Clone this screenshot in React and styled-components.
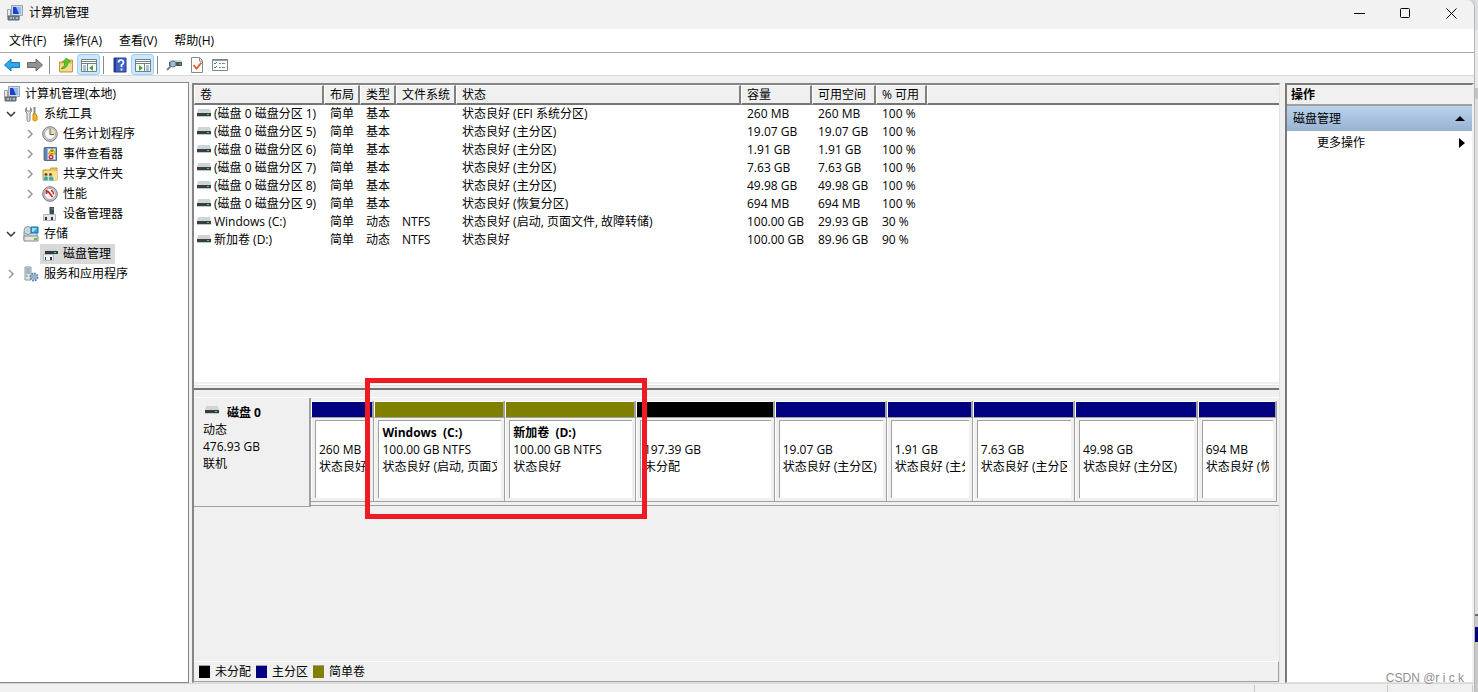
import React from "react";
import styled, { createGlobalStyle, css } from "styled-components";

const tree = [
  { label: "计算机管理(本地)", icon: "computer", depth: 0 },
  { label: "系统工具", icon: "tools", depth: 1, arrow: "open" },
  { label: "任务计划程序", icon: "clock", depth: 2, arrow: "closed" },
  { label: "事件查看器", icon: "events", depth: 2, arrow: "closed" },
  { label: "共享文件夹", icon: "shared", depth: 2, arrow: "closed" },
  { label: "性能", icon: "perf", depth: 2, arrow: "closed" },
  { label: "设备管理器", icon: "device", depth: 2 },
  { label: "存储", icon: "storage", depth: 1, arrow: "open" },
  { label: "磁盘管理", icon: "diskmgmt", depth: 2, selected: true },
  { label: "服务和应用程序", icon: "services", depth: 1, arrow: "closed" },
];

const columns = [
  ["卷", 130],
  ["布局", 36],
  ["类型", 36],
  ["文件系统", 60],
  ["状态", 285],
  ["容量", 71],
  ["可用空间", 64],
  ["% 可用", 51],
];

const volumes = [
  ["(磁盘 0 磁盘分区 1)", "简单", "基本", "", "状态良好 (EFI 系统分区)", "260 MB", "260 MB", "100 %"],
  ["(磁盘 0 磁盘分区 5)", "简单", "基本", "", "状态良好 (主分区)", "19.07 GB", "19.07 GB", "100 %"],
  ["(磁盘 0 磁盘分区 6)", "简单", "基本", "", "状态良好 (主分区)", "1.91 GB", "1.91 GB", "100 %"],
  ["(磁盘 0 磁盘分区 7)", "简单", "基本", "", "状态良好 (主分区)", "7.63 GB", "7.63 GB", "100 %"],
  ["(磁盘 0 磁盘分区 8)", "简单", "基本", "", "状态良好 (主分区)", "49.98 GB", "49.98 GB", "100 %"],
  ["(磁盘 0 磁盘分区 9)", "简单", "基本", "", "状态良好 (恢复分区)", "694 MB", "694 MB", "100 %"],
  ["Windows (C:)", "简单", "动态", "NTFS", "状态良好 (启动, 页面文件, 故障转储)", "100.00 GB", "29.93 GB", "30 %"],
  ["新加卷 (D:)", "简单", "动态", "NTFS", "状态良好", "100.00 GB", "89.96 GB", "90 %"],
];

const NAVY = "#000080";
const OLIVE = "#808000";
const BLACK = "#000";

const partitions = [
  { weight: 63, color: NAVY, size: "260 MB", status: "状态良好" },
  { weight: 131, color: OLIVE, name: "Windows  (C:)", size: "100.00 GB NTFS", status: "状态良好 (启动, 页面文件, 故障转储)" },
  { weight: 131, color: OLIVE, name: "新加卷  (D:)", size: "100.00 GB NTFS", status: "状态良好" },
  { weight: 139, color: BLACK, size: "197.39 GB", status: "未分配" },
  { weight: 112, color: NAVY, size: "19.07 GB", status: "状态良好 (主分区)" },
  { weight: 86, color: NAVY, size: "1.91 GB", status: "状态良好 (主分区)" },
  { weight: 102, color: NAVY, size: "7.63 GB", status: "状态良好 (主分区)" },
  { weight: 123, color: NAVY, size: "49.98 GB", status: "状态良好 (主分区)" },
  { weight: 79, color: NAVY, size: "694 MB", status: "状态良好 (恢复分区)" },
];

const legend = [
  ["未分配", BLACK],
  ["主分区", NAVY],
  ["简单卷", OLIVE],
];

const icons = {
  computer: (
    <>
      <path d="M4.500.5h11v10h-11z" fill="#d5dae0" stroke="#9aa3ae" />
      <path d="M6 2h8v7H6z" fill="#1c3fd0" />
      <path d="M9 2h5v7h-2z" fill="#8dbdf5" />
      <path d="M9 10h4v2H9z" fill="#a3a9b1" />
      <path d="M.5 4.500h3v7h-3z" fill="#e6eaee" stroke="#9aa1ab" />
      <path d="M1 11h11v4H1z" fill="#75838d" stroke="#58656e" />
      <path d="M3 13h2M6 13h1M9 13h2" stroke="#dce8ee" />
    </>
  ),
  tools: (
    <>
      <path d="M4 7v7a1.500 1.500 0 0 0 3 0V7c2-1 2-4 .5-5.500V5h-4V1.500C2 3 2 6 4 7z" fill="#e4e4e4" stroke="#858585" />
      <path d="M11.500 1v8" stroke="#8a8a8a" strokeWidth="2" />
      <path d="M10 8h3v1l1 1v4q-2.500 2-4 0v-4z" fill="#f4b622" stroke="#c98a08" />
    </>
  ),
  clock: (
    <>
      <circle cx="8" cy="8" r="7.300" fill="#d0d3d7" stroke="#777b80" />
      <circle cx="8" cy="8" r="5.500" fill="#fbf8ee" stroke="#a4a8ad" />
      <path d="M8 8V2.500A5.500 5.500 0 0 1 13.500 8z" fill="#f0d9a4" />
      <path d="M8 3v5.500h4" fill="none" stroke="#525b68" />
    </>
  ),
  events: (
    <>
      <path d="M2.500 1.500h12v13h-12z" fill="#8eb4dc" stroke="#486a94" />
      <path d="M4 2v12" stroke="#34568c" />
      <path d="M1 3h3M1 5h3M1 7h3M1 9h3M1 11h3M1 13h3" stroke="#6d7f96" />
      <path d="M6 3h7v10H6z" fill="#e6eff8" />
      <path d="M10 2l4 6H6.500z" fill="#ffdc38" stroke="#bd9714" />
      <path d="M10 4v2M10 7v.7" stroke="#332b00" />
      <circle cx="9" cy="11" r="2.500" fill="#d52d2d" />
      <path d="M8 10l2 2M10 10l-2 2" stroke="#fff" strokeWidth=".7" />
    </>
  ),
  shared: (
    <>
      <path d="M1 4h7l1-2h6v12H1z" fill="#edc45f" stroke="#c49a35" />
      <path d="M2 5h13v9H2z" fill="#f9df8c" />
      <circle cx="4" cy="8.500" r="1.500" fill="#594836" />
      <circle cx="8.500" cy="8.500" r="1.500" fill="#594836" />
      <path d="M1 15q0-5 3-5t3 5zM6 15q0-5 3-5t3 5z" fill="#49a89e" stroke="#ecf5ed" strokeWidth=".6" />
    </>
  ),
  perf: (
    <>
      <circle cx="8" cy="8" r="7.300" fill="#c9cccf" stroke="#757575" />
      <circle cx="8" cy="8" r="5.500" fill="#fff" stroke="#a9a9a9" />
      <path d="M4.500 8V5l2 1 4 5" fill="none" stroke="#cf2020" strokeWidth="1.700" />
      <path d="M9 4.500q2.500.5 2.500 4" fill="none" stroke="#cf2020" strokeWidth="1.300" />
    </>
  ),
  device: (
    <>
      <path d="M7 1h5v8H7z" fill="#414950" />
      <path d="M7 1h1v8H7z" fill="#9ea6ad" />
      <circle cx="10.500" cy="3" r=".8" fill="#46e06c" />
      <path d="M1.500 8.500h12v6h-12z" fill="#e4e6e9" stroke="#b0b5ba" />
      <path d="M3 11h2v3H3zM9 11h2v3H9z" fill="#30363c" />
    </>
  ),
  storage: (
    <>
      <path d="M1 6l2-3h11v11H1z" fill="#d8dcdf" stroke="#92989e" />
      <circle cx="5" cy="4.500" r="4" fill="#ccdedf" stroke="#82979c" />
      <circle cx="5" cy="4.500" r="1" fill="#fff" stroke="#829090" strokeWidth=".5" />
      <path d="M8 1h7v6H8z" fill="#2ba8e4" stroke="#196fa0" />
      <path d="M9 2h5l-4 4H9z" fill="#9bdefa" />
      <path d="M1 10h14v5H1z" fill="#e2e4e6" stroke="#868b90" />
      <path d="M11 12h3v2h-3z" fill="#55cc31" />
    </>
  ),
  diskmgmt: (
    <>
      <path d="M4 3h10l1 2H3z" fill="#cdd3d9" />
      <path d="M3 5h13v3H3z" fill="#343a3f" />
      <path d="M12 6.500h2" stroke="#2fe267" />
      <path d="M1.500 8.500h10v6h-10z" fill="#f0f1f2" stroke="#b5babf" />
      <path d="M3 11h1v3H3zM8 11h2v3H8z" fill="#33383c" />
    </>
  ),
  services: (
    <>
      <path d="M2 1h6v13H2z" fill="#dfe5eb" stroke="#8b98a5" />
      <path d="M3 3h4M3 5h4M3 7h4" stroke="#6f8295" />
      <path d="M3 10h2" stroke="#39a639" />
      <circle cx="11" cy="11" r="3.500" fill="#b6d1e7" stroke="#6389aa" strokeWidth="2" strokeDasharray="1.800 .9" />
      <circle cx="11" cy="11" r="1.300" fill="#fff" stroke="#6389aa" />
    </>
  ),
  back: <path d="M.5 8L7 2v3.500h8.500v5H7V14z" fill="#31a8ea" stroke="#1679b8" strokeLinejoin="round" />,
  forward: <path d="M15.500 8L9 2v3.500H.5v5H9V14z" fill="#929292" stroke="#666" strokeLinejoin="round" />,
  up: (
    <>
      <path d="M1.500 5h5l1-2h7v12h-13z" fill="#edc963" stroke="#be9a43" />
      <path d="M2 7h12v7H2z" fill="#f6dc8c" />
      <path d="M3.500 11Q7 10 7 5H4.500L8.500 1l4 4H10q0 6-6.500 7z" fill="#58c832" stroke="#329418" strokeWidth=".7" />
    </>
  ),
  paneLeft: (
    <>
      <path d="M.5 2.500h15v12H.5z" fill="#fff" stroke="#777e85" />
      <path d="M1 4.500h14M1 6.500h14M6.500 7v8" stroke="#777e85" />
      <path d="M2 9h3M2 11h3M2 13h3" stroke="#4d82b4" />
      <path d="M12 8v6l-4-3z" fill="#37ad30" />
    </>
  ),
  paneRight: (
    <>
      <path d="M.5 2.500h15v12H.5z" fill="#fff" stroke="#777e85" />
      <path d="M1 4.500h14M1 6.500h14M9.500 7v8" stroke="#777e85" />
      <path d="M11 9h3M11 11h3M11 13h3" stroke="#4d82b4" />
      <path d="M4 8v6l4-3z" fill="#37ad30" />
    </>
  ),
  help: (
    <>
      <path d="M2 1h12v14H2z" fill="#3f63ca" stroke="#263f8f" />
      <path d="M2 1h2v14H2z" fill="#243b87" />
      <path d="M6.500 5.500Q6.500 3 9 3t2.500 2.500q0 1.500-2 2.500V10M9.500 11.500v2" fill="none" stroke="#fff" strokeWidth="1.700" />
    </>
  ),
  scan: (
    <>
      <path d="M4 3h11l1 2H3z" fill="#ced5db" />
      <path d="M3 5h13v4H3z" fill="#4a555e" />
      <path d="M13 7h2" stroke="#3bdd4f" />
      <circle cx="7" cy="7" r="3" fill="#9dbed3" stroke="#65798a" />
      <path d="M5 9l-4 4" stroke="#78858e" strokeWidth="2" />
    </>
  ),
  check: (
    <>
      <path d="M2.500.5h8l3 3v12h-11z" fill="#fff" stroke="#83898d" />
      <path d="M10.500 1v3h3" fill="none" stroke="#83898d" />
      <path d="M4.500 8l3 3.500 5-6" fill="none" stroke="#e45c26" strokeWidth="1.800" />
    </>
  ),
  props: (
    <>
      <path d="M.5 2.500h15v11H.5z" fill="#fff" stroke="#7c858c" />
      <path d="M1 3.500h14" stroke="#969da2" />
      <path d="M2 6l1 1 2-2M2 10l1 1 2-2" fill="none" stroke="#277dc1" />
      <path d="M7 6.500h2M10 6.500h3M7 10.500h2M10 10.500h3" stroke="#7e8890" />
    </>
  ),
};

const Icon = ({ name }) => (
  <IconSvg viewBox="0 0 16 16" aria-hidden="true">
    {icons[name]}
  </IconSvg>
);

const DriveIcon = () => (
  <DriveSvg viewBox="0 0 14 8" aria-hidden="true">
    <path d="M1 0h12l1 4H0z" fill="#d0d4d8" />
    <path d="M0 4h14v3H0z" fill="#3b3e40" />
    <path d="M0 7.500h14" stroke="#c4c7ca" />
    <path d="M10 5.500h2" stroke="#25eb4c" />
  </DriveSvg>
);

const App = () => {
  return (
    <Desktop>
      <GlobalStyle />
      <Window>
        <TitleBar>
          <Icon name="computer" />
          <Caption>计算机管理</Caption>
          <CaptionButton aria-label="最小化">
            <svg width="11" height="11" viewBox="0 0 11 11">
              <path d="M0 5.500h11" stroke="#000" />
            </svg>
          </CaptionButton>
          <CaptionButton aria-label="最大化">
            <svg width="11" height="11" viewBox="0 0 11 11">
              <rect x=".5" y=".5" width="9" height="9" rx="1" fill="none" stroke="#000" />
            </svg>
          </CaptionButton>
          <CaptionButton aria-label="关闭">
            <svg width="11" height="11" viewBox="0 0 11 11">
              <path d="M.5.5l10 10M10.500.5l-10 10" stroke="#000" />
            </svg>
          </CaptionButton>
        </TitleBar>
        <MenuBar>
          <MenuButton>文件(F)</MenuButton>
          <MenuButton>操作(A)</MenuButton>
          <MenuButton>查看(V)</MenuButton>
          <MenuButton>帮助(H)</MenuButton>
        </MenuBar>
        <Toolbar>
          <ToolButton aria-label="后退"><Icon name="back" /></ToolButton>
          <ToolButton aria-label="前进"><Icon name="forward" /></ToolButton>
          <ToolDivider />
          <ToolButton aria-label="上一级"><Icon name="up" /></ToolButton>
          <ToolButton aria-label="控制台树" $active><Icon name="paneLeft" /></ToolButton>
          <ToolDivider />
          <ToolButton aria-label="帮助"><Icon name="help" /></ToolButton>
          <ToolButton aria-label="操作窗格" $active><Icon name="paneRight" /></ToolButton>
          <ToolDivider />
          <ToolButton aria-label="重新扫描"><Icon name="scan" /></ToolButton>
          <ToolButton aria-label="应用"><Icon name="check" /></ToolButton>
          <ToolButton aria-label="设置"><Icon name="props" /></ToolButton>
        </Toolbar>
        <Body>
          <Sidebar>
            {tree.map((node) => (
              <TreeRow key={node.label} $depth={node.depth}>
                {node.depth > 0 && (
                  <Expander disabled={!node.arrow} aria-label={node.label}>
                    {node.arrow === "open" && (
                      <svg width="10" height="10" viewBox="0 0 10 10">
                        <path d="M1 3l4 4 4-4" fill="none" stroke="#333" strokeWidth="1.500" />
                      </svg>
                    )}
                    {node.arrow === "closed" && (
                      <svg width="10" height="10" viewBox="0 0 10 10">
                        <path d="M3 1l4 4-4 4" fill="none" stroke="#999" strokeWidth="1.500" />
                      </svg>
                    )}
                  </Expander>
                )}
                <TreeItem $selected={node.selected}>
                  <Icon name={node.icon} />
                  {node.label}
                </TreeItem>
              </TreeRow>
            ))}
          </Sidebar>
          <Main>
            <VolumeList>
              <Table>
                <colgroup>
                  {columns.map(([label, width]) => (
                    <Col key={label} $width={width} />
                  ))}
                  <col />
                </colgroup>
                <thead>
                  <tr>
                    {columns.map(([label]) => (
                      <HeadCell key={label}>{label}</HeadCell>
                    ))}
                    <HeadCell as="td" $last />
                  </tr>
                </thead>
                <tbody>
                  {volumes.map((row) => (
                    <tr key={row[0]}>
                      {row.map((value, i) => (
                        <Cell key={i} $first={i === 0}>
                          {i === 0 && <DriveIcon />}
                          {value}
                        </Cell>
                      ))}
                      <Cell />
                    </tr>
                  ))}
                </tbody>
              </Table>
            </VolumeList>
            <Splitter />
            <DiskView>
              <DiskRow>
                <DiskLabel>
                  <DiskName>
                    <DriveIcon />
                    磁盘 0
                  </DiskName>
                  <Line>动态</Line>
                  <Line>476.93 GB</Line>
                  <Line>联机</Line>
                </DiskLabel>
                <Partitions>
                  {partitions.map((part, i) => (
                    <Partition key={i} $weight={part.weight}>
                      <PartitionBar $color={part.color} />
                      <PartitionBody>
                        <PartitionInfo>
                          <Line $bold>{part.name}</Line>
                          <Line>{part.size}</Line>
                          <Line>{part.status}</Line>
                        </PartitionInfo>
                      </PartitionBody>
                    </Partition>
                  ))}
                </Partitions>
                <Highlight />
              </DiskRow>
              <Legend>
                {legend.map(([label, color]) => (
                  <LegendItem key={label}>
                    <Swatch $color={color} />
                    {label}
                  </LegendItem>
                ))}
              </Legend>
            </DiskView>
          </Main>
          <Actions>
            <ActionsTitle>操作</ActionsTitle>
            <ActionsGroup>
              磁盘管理
              <svg width="10" height="5" viewBox="0 0 10 5">
                <path d="M5 0l5 5H0z" />
              </svg>
            </ActionsGroup>
            <ActionsItem>
              更多操作
              <svg width="6" height="10" viewBox="0 0 6 10">
                <path d="M0 0l6 5-6 5z" />
              </svg>
            </ActionsItem>
          </Actions>
        </Body>
        <StatusBar>
          <StatusPart $width={133} />
          <StatusPart $width={85} />
          <StatusPart $width={2} />
        </StatusBar>
      </Window>
      <Backdrop />
      <Watermark>CSDN @r i c k</Watermark>
    </Desktop>
  );
};

const GlobalStyle = createGlobalStyle`
  * {
    box-sizing: border-box;
  }
  body {
    margin: 0;
    color: #000;
    font: 12px/16px "Open Sans", "Noto Sans CJK SC", sans-serif;
  }
  button {
    margin: 0;
    padding: 0;
    border: none;
    background: none;
    color: inherit;
    font: inherit;
  }
`;

const Desktop = styled.div`
  position: relative;
  display: flex;
  min-height: 100vh;
  background: #d4d7d9;
`;

const Window = styled.div`
  flex: 1;
  min-width: 0;
  display: flex;
  flex-direction: column;
  overflow: hidden;
  background: #f0f0f0;
  border-right: 1px solid #b4b6b8;
  border-top-right-radius: 8px;
`;

const Backdrop = styled.div`
  width: 3px;
  background: linear-gradient(
    #dcdfe2 0 30px,
    #e9e9e9 30px 88px,
    #c4c4c4 88px 99px,
    #dedede 99px 614px,
    #6d6d6d 614px 616px,
    #c8c8c8 616px 627px,
    #000080 627px 642px,
    #c8c8c8 642px
  );
`;

const IconSvg = styled.svg`
  flex: none;
  width: 16px;
  height: 16px;
`;

const DriveSvg = styled.svg`
  flex: none;
  width: 14px;
  height: 8px;
`;

const TitleBar = styled.header`
  display: flex;
  align-items: center;
  height: 29px;
  padding: 0 0 3px 7px;
  background: #f2f2f2;
`;

const Caption = styled.div`
  flex: 1;
  padding-left: 6px;
`;

const CaptionButton = styled.button`
  display: flex;
  align-items: center;
  justify-content: center;
  width: 46px;
  height: 26px;
`;

const MenuBar = styled.nav`
  display: flex;
  height: 24px;
  padding-left: 1px;
  background: #fff;
  border-bottom: 1px solid #a8a8a8;
`;

const MenuButton = styled.button`
  padding: 1px 9px 0 8px;
`;

const Toolbar = styled.div`
  display: flex;
  align-items: center;
  height: 23px;
  padding-top: 1px;
  background: #fff;
  border-bottom: 1px solid #d9d9d9;
`;

const ToolButton = styled.button`
  display: flex;
  align-items: center;
  justify-content: center;
  width: 23px;
  height: 21px;
  border-radius: 3px;
  ${({ $active }) =>
    $active &&
    css`
      background: #cce8ff;
      border: 1px solid #99d1ff;
    `}
`;

const ToolDivider = styled.span`
  width: 1px;
  height: 18px;
  margin: 0 4px 0 3px;
  background: #8b8b8b;
`;

const Body = styled.div`
  flex: 1;
  display: flex;
  padding-top: 6px;
`;

const Sidebar = styled.aside`
  flex: 0 0 189px;
  padding-top: 1px;
  background: #fff;
  border: solid #828790;
  border-width: 1px 1px 1px 0;
`;

const TreeRow = styled.div`
  display: flex;
  height: 20px;
  padding-left: ${({ $depth }) => ($depth ? $depth * 19 - 16 : 2)}px;
`;

const Expander = styled.button`
  display: flex;
  align-items: center;
  justify-content: center;
  width: 16px;
  margin-right: 2px;
`;

const TreeItem = styled.button`
  display: flex;
  align-items: center;
  gap: 5px;
  padding: 0 4px 0 2px;
  white-space: nowrap;
  background: ${({ $selected }) => ($selected ? "#d9d9d9" : "none")};
`;

const Main = styled.main`
  flex: 1;
  min-width: 0;
  display: flex;
  flex-direction: column;
  margin: 1px 5px 0 3px;
  border: solid #696969;
  border-width: 2px 1px 1px 2px;
  border-color: #868686 #e3e3e3 #e3e3e3 #868686;
`;

const VolumeList = styled.section`
  flex: 297 1 0;
  background: #fff;
  overflow: hidden;
`;

const Table = styled.table`
  width: 100%;
  table-layout: fixed;
  border-collapse: separate;
  border-spacing: 0;
`;

const Col = styled.col`
  width: ${({ $width }) => $width}px;
`;

const HeadCell = styled.th`
  height: 20px;
  padding: 0 0 0 5px;
  text-align: left;
  font-weight: normal;
  line-height: 16px;
  white-space: nowrap;
  background: #f0f0f0;
  border: solid;
  border-width: 1px 2px 2px 1px;
  border-color: #fff #808080 #757575 #fff;
  ${({ $last }) => $last && "border-right-width: 0;"}
`;

const Cell = styled.td`
  height: 18px;
  padding: 0 0 0 ${({ $first }) => ($first ? 3 : 6)}px;
  white-space: nowrap;
  line-height: 18px;
  svg {
    margin-right: 3px;
    vertical-align: 1px;
  }
`;

const Splitter = styled.div`
  height: 8px;
  background: #f0f0f0;
  border-top: 2px solid #f0f0f0;
  border-bottom: 2px solid #757575;
  box-shadow: inset 0 1px #fff, inset 0 2px #e3e3e3;
`;

const DiskView = styled.section`
  flex: 285 1 0;
  display: flex;
  flex-direction: column;
  justify-content: space-between;
  padding-top: 7px;
`;

const DiskRow = styled.div`
  position: relative;
  display: flex;
  align-items: flex-start;
  border-top: 1px solid #fff;
`;

const DiskLabel = styled.div`
  flex: 0 0 117px;
  height: 109px;
  padding: 6px 9px;
  border: solid #a0a0a0;
  border-width: 0 2px 1px 0;
`;

const DiskName = styled.div`
  display: flex;
  align-items: center;
  gap: 8px;
  height: 17px;
  padding-left: 2px;
  font-weight: bold;
  svg {
    margin-bottom: 5px;
  }
`;

const Line = styled.div`
  height: 17px;
  line-height: 17px;
  white-space: pre;
  font-weight: ${({ $bold }) => ($bold ? "bold" : "normal")};
`;

const Partitions = styled.div`
  flex: 1;
  min-width: 0;
  display: flex;
  height: 108px;
  padding: 3px 2px 3px 0;
  border-bottom: 1px solid #a0a0a0;
`;

const Partition = styled.div`
  flex: ${({ $weight }) => $weight} 1 0;
  min-width: 0;
  height: 101px;
  border: solid #a0a0a0;
  border-width: 0 1px 1px 0;
`;

const PartitionBar = styled.div`
  height: 17px;
  background: ${({ $color }) => $color};
  border: solid #fff;
  border-width: 1px 0 0 1px;
  border-right: 1px solid #a0a0a0;
  border-bottom: 1px solid #a0a0a0;
`;

const PartitionBody = styled.div`
  padding: 2px 3px 3px;
  border-left: 1px solid #fff;
`;

const PartitionInfo = styled.div`
  height: 78px;
  padding: 3px 0;
  background: #fff;
  border: solid #a0a0a0;
  border-width: 1px 0 0 1px;
  div {
    margin: 0 4px 0 3px;
    overflow: hidden;
  }
`;

/* red annotation around the two dynamic volumes */
const Highlight = styled.div`
  position: absolute;
  top: -20px;
  left: 171px;
  width: 282px;
  height: 141px;
  border: 5px solid #ed1c24;
`;

const Legend = styled.footer`
  display: flex;
  align-items: center;
  gap: 5px;
  height: 21px;
  padding-left: 5px;
  border: solid #a0a0a0;
  border-width: 1px 1px 1px 0;
  border-top-color: #fff;
`;

const LegendItem = styled.span`
  display: flex;
  align-items: center;
  gap: 5px;
`;

const Swatch = styled.span`
  width: 11px;
  height: 13px;
  background: ${({ $color }) => $color};
  border-top: 1px solid #a0a0a0;
`;

const Actions = styled.aside`
  flex: 0 0 189px;
  margin-top: 1px;
  background: #fff;
  border: solid #7a7a7a;
  border-width: 2px 2px 1px 2px;
  border-right-color: #f0f0f0;
  border-bottom-color: #e3e3e3;
`;

const ActionsTitle = styled.h2`
  height: 21px;
  margin: 0;
  padding-left: 4px;
  font-size: 12px;
  line-height: 19px;
  background: #f0f0f0;
  border-bottom: 2px solid #a0a0a0;
`;

const ActionsGroup = styled.button`
  display: flex;
  align-items: center;
  justify-content: space-between;
  width: 100%;
  height: 25px;
  padding: 0 7px 0 6px;
  background: linear-gradient(#b9d3ed, #98b3d1);
`;

const ActionsItem = styled.button`
  display: flex;
  align-items: center;
  justify-content: space-between;
  width: 100%;
  height: 24px;
  padding: 0 7px 0 30px;
`;

const StatusBar = styled.footer`
  display: flex;
  justify-content: flex-end;
  height: 9px;
  padding-top: 1px;
  border-top: 1px solid #d7d7d7;
`;

const StatusPart = styled.span`
  width: ${({ $width }) => $width}px;
  border-left: 1px solid #c8c8c8;
`;

const Watermark = styled.div`
  position: absolute;
  right: 14px;
  bottom: 6px;
  color: #8f8f8f;
  font: 12px/16px "Liberation Sans", sans-serif;
`;

export default App;
